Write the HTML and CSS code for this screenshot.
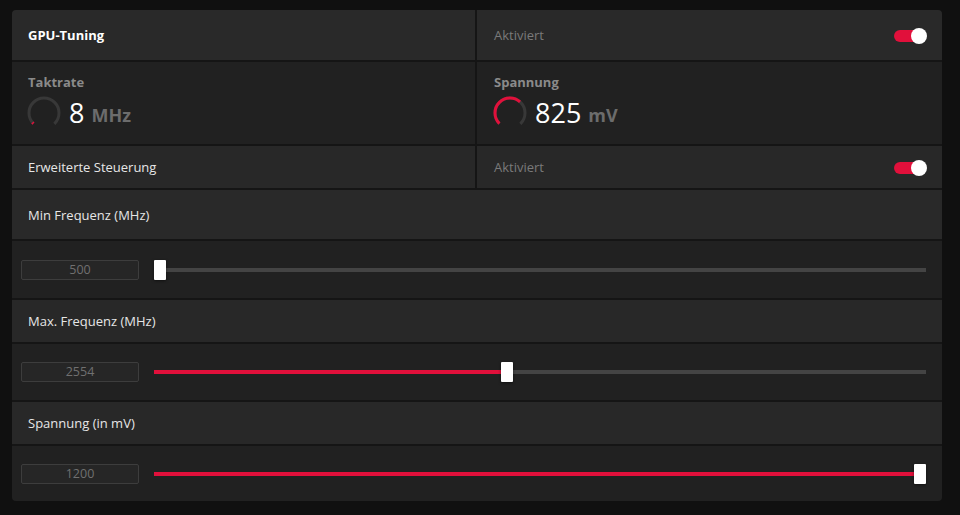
FILE: index.html
```html
<!DOCTYPE html>
<html lang="de">
<head>
<meta charset="utf-8">
<title>GPU-Tuning</title>
<link rel="stylesheet" href="styles.css">
</head>
<body>
<div class="panel">
  <div class="cell head left"><span class="title">GPU-Tuning</span></div>
  <div class="cell head right"><span class="muted">Aktiviert</span><span class="toggle"><span class="knob"></span></span></div>

  <div class="cell stat left">
    <div class="stat-label">Taktrate</div>
    <div class="stat-value">
      <svg class="gauge" width="36" height="36" viewBox="0 0 36 36">
        <circle cx="18" cy="18" r="15" class="g-track"/>
        <circle cx="18" cy="18" r="15" class="g-fill" stroke-dasharray="1.5 94.25"/>
      </svg>
      <span class="num">8</span><span class="unit">MHz</span>
    </div>
  </div>
  <div class="cell stat right">
    <div class="stat-label">Spannung</div>
    <div class="stat-value">
      <svg class="gauge" width="36" height="36" viewBox="0 0 36 36">
        <circle cx="18" cy="18" r="15" class="g-track"/>
        <circle cx="18" cy="18" r="15" class="g-fill" stroke-dasharray="46 94.25"/>
      </svg>
      <span class="num">825</span><span class="unit">mV</span>
    </div>
  </div>

  <div class="cell head2 left"><span class="label">Erweiterte Steuerung</span></div>
  <div class="cell head2 right"><span class="muted">Aktiviert</span><span class="toggle"><span class="knob"></span></span></div>

  <div class="row head"><span class="label">Min Frequenz (MHz)</span></div>
  <div class="row slide r-min-s">
    <div class="input">500</div>
    <div class="slider"><div class="track"><div class="fill" style="width:0%"></div></div><div class="thumb" style="left:0%"></div></div>
  </div>

  <div class="row head2"><span class="label">Max. Frequenz (MHz)</span></div>
  <div class="row slide r-max-s">
    <div class="input">2554</div>
    <div class="slider"><div class="track"><div class="fill" style="width:45.7%"></div></div><div class="thumb" style="left:45.7%"></div></div>
  </div>

  <div class="row head2"><span class="label">Spannung (in mV)</span></div>
  <div class="row slide r-v-s">
    <div class="input">1200</div>
    <div class="slider"><div class="track"><div class="fill" style="width:100%"></div></div><div class="thumb" style="left:100%"></div></div>
  </div>
</div>
</body>
</html>
```
FILE: styles.css
```css
* { box-sizing: border-box; }
html, body { margin: 0; padding: 0; }
body {
  background: #101010;
  width: 960px;
  height: 515px;
  font-family: "Open Sans", "Noto Sans", sans-serif;
  padding: 10px 0 0 12px;
}
.panel {
  width: 930px;
  height: 491px;
  display: grid;
  grid-template-columns: 463px 465px;
  grid-template-rows: 50px 82px 42px 49px 57px 42px 56px 42px 55px;
  gap: 2px;
  background: #151515;
  border-radius: 4px;
  overflow: hidden;
}
.cell { display: flex; align-items: center; }
.row { grid-column: 1 / 3; display: flex; align-items: center; }
.head { background: #292929; }
.head2 { background: #282828; }
.stat, .slide { background: #212121; }
.left { padding-left: 16px; }
.right { padding-left: 17px; padding-right: 16px; justify-content: space-between; }
.row.head, .row.head2 { padding-left: 16px; }
.title { color: #ffffff; font-weight: 700; font-size: 13px; }
.label { color: #e6e6e6; font-size: 13px; }
.muted { color: #7a7a7a; font-size: 13px; }
.toggle {
  position: relative;
  width: 32px;
  height: 12px;
  border-radius: 6px;
  background: #e1103b;
  margin-top: 1px;
}
.knob {
  position: absolute;
  right: -1px;
  top: -2px;
  width: 16px;
  height: 16px;
  border-radius: 50%;
  background: #ffffff;
}
.stat { flex-direction: column; align-items: flex-start; justify-content: flex-start; padding-top: 11px; }
.stat-label { color: #8a8a8a; font-weight: 700; font-size: 13px; line-height: 18px; }
.stat-value { display: flex; align-items: center; margin-top: 4px; margin-left: -2px; }
.gauge { display: block; }
.g-track { fill: none; stroke: #383838; stroke-width: 3; stroke-dasharray: 70.69 94.25; transform: rotate(135deg); transform-origin: 18px 18px; }
.g-fill { fill: none; stroke: #e1103b; stroke-width: 3; transform: rotate(135deg); transform-origin: 18px 18px; }
.num { color: #ffffff; font-size: 27px; margin-left: 7px; line-height: 36px; }
.unit { color: #6c6c6c; font-size: 18px; font-weight: 700; margin-left: 7px; margin-top: 4px; }
.slide { padding-left: 9px; padding-right: 16px; }
.input {
  width: 118px;
  height: 20px;
  border: 1px solid #3d3d3d;
  background: #262626;
  color: #707070;
  font-size: 12.5px;
  text-align: center;
  line-height: 18px;
  border-radius: 2px;
}
.slider { position: relative; flex: 1; margin-left: 15px; height: 20px; }
.track {
  position: absolute;
  left: 0; right: 0; top: 8px;
  height: 4px;
  background: #444444;
}
.fill { height: 100%; background: #e1103b; }
.thumb {
  position: absolute;
  top: 0;
  width: 12px;
  height: 20px;
  background: #ffffff;
  border-radius: 1px;
  box-shadow: 0 1px 3px rgba(0,0,0,0.5);
}
.r-min-s .thumb { transform: translateX(0); }
.r-max-s .thumb { transform: translateX(-6px); }
.r-v-s .thumb { transform: translateX(-12px); }
```
